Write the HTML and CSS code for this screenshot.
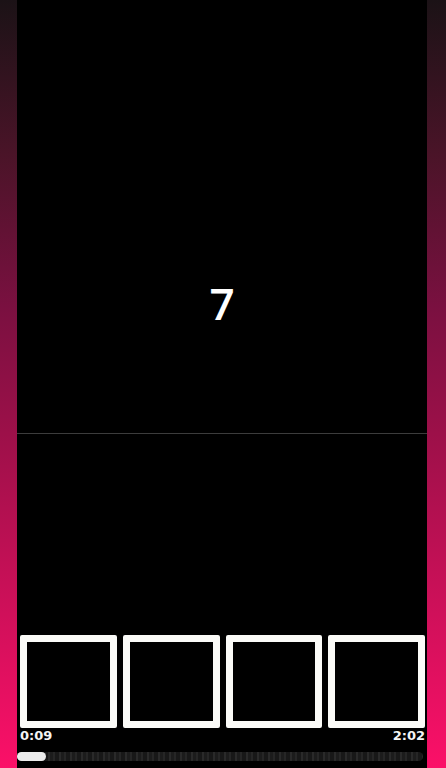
FILE: index.html
```html
<!DOCTYPE html>
<html>
<head>
<meta charset="utf-8">
<link rel="stylesheet" href="styles.css">
</head>
<body>
<div class="frame">
  <div class="stage">
    <div class="viewer">
      <span class="count">7</span>
    </div>
    <div class="divider"></div>
    <div class="lower">
      <div class="thumbs">
        <div class="thumb"></div>
        <div class="thumb"></div>
        <div class="thumb"></div>
        <div class="thumb"></div>
      </div>
      <div class="times">
        <span class="time">0:09</span>
        <span class="time">2:02</span>
      </div>
      <div class="track">
        <div class="fill"></div>
      </div>
    </div>
  </div>
</div>
</body>
</html>
```
FILE: styles.css
```css
html, body {
  margin: 0;
  padding: 0;
}
body {
  width: 446px;
  height: 768px;
  overflow: hidden;
  background: linear-gradient(to bottom, #1b1216 0%, #4a1428 20%, #7a1040 40%, #a0104a 58%, #d0105a 80%, #fb1068 100%);
  font-family: "Open Sans", "DejaVu Sans", sans-serif;
}
.frame {
  display: flex;
  height: 768px;
  padding: 0 19px 0 17px;
}
.stage {
  flex: 1;
  background: #000;
  display: flex;
  flex-direction: column;
}
.viewer {
  height: 433px;
  display: flex;
  justify-content: center;
  align-items: flex-start;
}
.count {
  color: #fff;
  font-size: 44px;
  font-weight: 600;
  line-height: 44px;
  margin-top: 281px;
}
.divider {
  height: 1px;
  background: #3c3c3c;
}
.lower {
  display: flex;
  flex-direction: column;
  padding-top: 201px;
}
.thumbs {
  display: flex;
  gap: 6px;
  padding: 0 2px 0 3px;
}
.thumb {
  flex: 1;
  height: 93px;
  box-sizing: border-box;
  border: 7px solid #fbfbf8;
  border-radius: 2px;
  background: #000;
}
.times {
  display: flex;
  justify-content: space-between;
  padding: 1px 2px 0 3px;
  height: 14px;
}
.time {
  color: #f4f4f4;
  font-family: "DejaVu Sans", sans-serif;
  font-weight: bold;
  font-size: 13px;
  line-height: 14px;
}
.track {
  margin-top: 9px;
  margin-right: 4px;
  height: 9px;
  border-radius: 5px;
  background:
    repeating-linear-gradient(to right, #1c1c1c 0px, #1c1c1c 3px, #262626 3px, #262626 5px, #181818 5px, #181818 9px, #2a2a2a 9px, #2a2a2a 11px);
  display: flex;
}
.fill {
  width: 29px;
  height: 9px;
  border-radius: 5px;
  background: #ececec;
}
```
